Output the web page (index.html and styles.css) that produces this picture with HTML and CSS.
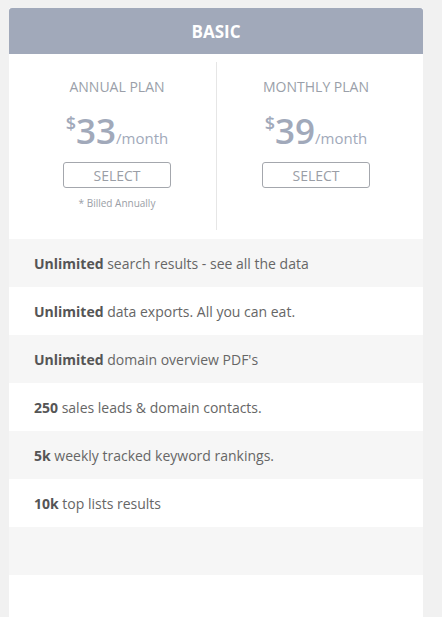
FILE: index.html
```html
<!DOCTYPE html>
<html>
<head>
<meta charset="utf-8">
<link rel="stylesheet" href="styles.css">
</head>
<body>
<div class="card">
  <div class="card-header">BASIC</div>
  <div class="plans">
    <div class="plan">
      <div class="plan-title">ANNUAL PLAN</div>
      <div class="price"><span class="cur">$</span><span class="amount">33</span><span class="per">/month</span></div>
      <button class="select">SELECT</button>
      <div class="note">* Billed Annually</div>
    </div>
    <div class="plan plan-right">
      <div class="plan-title">MONTHLY PLAN</div>
      <div class="price"><span class="cur">$</span><span class="amount">39</span><span class="per">/month</span></div>
      <button class="select">SELECT</button>
    </div>
  </div>
  <ul class="features">
    <li class="row alt"><b>Unlimited</b>&nbsp;search results - see all the data</li>
    <li class="row"><b>Unlimited</b>&nbsp;data exports. All you can eat.</li>
    <li class="row alt"><b>Unlimited</b>&nbsp;domain overview PDF's</li>
    <li class="row"><b>250</b>&nbsp;sales leads &amp; domain contacts.</li>
    <li class="row alt"><b>5k</b>&nbsp;weekly tracked keyword rankings.</li>
    <li class="row"><b>10k</b>&nbsp;top lists results</li>
    <li class="row alt"></li>
    <li class="row"></li>
  </ul>
</div>
</body>
</html>
```
FILE: styles.css
```css
html, body {
  margin: 0;
  padding: 0;
  background: #f1f1f1;
  font-family: "Open Sans", "Liberation Sans", sans-serif;
}
.card {
  margin: 8px 0 0 9px;
  width: 414px;
  background: #fff;
}
.card-header {
  height: 46px;
  background: #a1a9ba;
  color: #fff;
  font-weight: 700;
  font-size: 17px;
  display: flex;
  align-items: center;
  justify-content: center;
  border-radius: 3px 3px 0 0;
}
.plans {
  display: flex;
  padding: 8px 8px 9px 9px;
}
.plan {
  flex: 1;
  display: flex;
  flex-direction: column;
  align-items: center;
  height: 168px;
  box-sizing: border-box;
  padding-top: 16px;
}
.plan-right {
  border-left: 1px solid #e6e6e6;
}
.plan-title {
  font-size: 14px;
  color: #9a9fa9;
  line-height: 18px;
}
.price {
  margin-top: 15px;
  color: #a1a9ba;
  line-height: 40px;
  display: flex;
  align-items: flex-start;
}
.cur {
  font-size: 18px;
  font-weight: 600;
  line-height: 24px;
}
.amount {
  font-size: 35px;
  font-weight: 600;
  line-height: 40px;
}
.per {
  font-size: 15px;
  align-self: flex-end;
  line-height: 26px;
}
.select {
  margin-top: 11px;
  width: 108px;
  height: 26px;
  border: 1px solid #a4a7ad;
  border-radius: 3px;
  background: #fff;
  color: #9a9ea6;
  font-family: "Open Sans", "Liberation Sans", sans-serif;
  font-size: 14px;
  padding: 0;
}
.note {
  margin-top: 8px;
  font-size: 10px;
  color: #9a9ea6;
}
.features {
  list-style: none;
  margin: 0;
  padding: 0;
}
.row {
  height: 48px;
  display: flex;
  align-items: center;
  padding-left: 25px;
  font-size: 14px;
  color: #666;
  background: #fff;
}
.row.alt {
  background: #f6f6f6;
}
.row b {
  color: #555;
  font-weight: 700;
}
```
